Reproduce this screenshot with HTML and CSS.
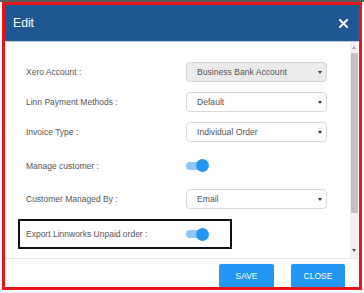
FILE: index.html
```html
<!DOCTYPE html>
<html>
<head>
<meta charset="utf-8">
<link rel="stylesheet" href="styles.css">
</head>
<body>
<div class="topstrip"></div>
<div class="frame">
  <div class="header">
    <span class="title">Edit</span>
    <svg class="close-icon" width="9" height="9" viewBox="0 0 9 9"><path d="M1 1L8 8M8 1L1 8" stroke="#fff" stroke-width="2" stroke-linecap="square"/></svg>
  </div>
  <div class="body">
    <div class="form">
      <div class="row">
        <span class="label">Xero Account :</span>
        <div class="select disabled"><span>Business Bank Account</span><i class="caret"></i></div>
      </div>
      <div class="row">
        <span class="label">Linn Payment Methods :</span>
        <div class="select"><span>Default</span><i class="caret"></i></div>
      </div>
      <div class="row">
        <span class="label">Invoice Type :</span>
        <div class="select"><span>Individual Order</span><i class="caret"></i></div>
      </div>
      <div class="row row-toggle">
        <span class="label">Manage customer :</span>
        <div class="toggle"><span class="knob"></span></div>
      </div>
      <div class="row">
        <span class="label">Customer Managed By :</span>
        <div class="select"><span>Email</span><i class="caret"></i></div>
      </div>
      <div class="row row-highlight">
        <span class="label">Export Linnworks Unpaid order :</span>
        <div class="toggle"><span class="knob"></span></div>
      </div>
    </div>
    <div class="scrollbar">
      <i class="arrow up"></i>
      <div class="thumb"></div>
      <i class="arrow down"></i>
    </div>
  </div>
  <div class="footer">
    <button class="btn save">SAVE</button>
    <button class="btn close">CLOSE</button>
  </div>
</div>
</body>
</html>
```

FILE: styles.css
```css
* { box-sizing: border-box; }
html, body { margin: 0; padding: 0; background: #fff; }
body {
  font-family: "Liberation Sans", Arial, sans-serif;
  width: 364px;
  height: 293px;
  overflow: hidden;
}
.topstrip {
  height: 2px;
  background: #5a5a5a;
}
.frame {
  margin-left: 2px;
  width: 360px;
  height: 288px;
  border: 3px solid #e8141c;
  display: flex;
  flex-direction: column;
  overflow: hidden;
  background: #fff;
}
.header {
  height: 37px;
  flex: none;
  background: #1f5792;
  border-bottom: 1px solid #b9cade;
  display: flex;
  align-items: center;
  justify-content: space-between;
  padding: 0 11px 0 8px;
}
.title {
  color: #fff;
  font-size: 12.2px;
}
.body {
  height: 216px;
  flex: none;
  display: flex;
}
.form {
  flex: 1;
  padding: 20px 0 0 21px;
  display: flex;
  flex-direction: column;
  gap: 10px;
}
.row {
  display: flex;
  align-items: center;
  height: 20px;
}
.row-toggle { height: 27px; }
.row-highlight {
  height: 30px;
  width: 214px;
  margin-left: -8px;
  padding-left: 6px;
  border: 2px solid #111;
}
.label {
  width: 160px;
  flex: none;
  font-size: 8.5px;
  color: #555;
}
.select {
  width: 141px;
  height: 20px;
  border: 1px solid #d9d9d9;
  border-radius: 4px;
  background: #fff;
  display: flex;
  align-items: center;
  justify-content: space-between;
  padding: 0 4px 0 10px;
  font-size: 8.6px;
  color: #555;
}
.select.disabled {
  background: #ebebeb;
  border-color: #d4d4d4;
}
.caret {
  width: 0;
  height: 0;
  border-left: 2px solid transparent;
  border-right: 2px solid transparent;
  border-top: 3px solid #333;
}
.toggle {
  position: relative;
  width: 18px;
  height: 8px;
  border-radius: 4px;
  background: #8fc6f6;
}
.knob {
  position: absolute;
  left: 10px;
  top: -2.5px;
  width: 13px;
  height: 13px;
  border-radius: 50%;
  background: #2196f3;
}
.scrollbar {
  width: 8px;
  margin-right: 1px;
  background: #f1f1f1;
  display: flex;
  flex-direction: column;
  align-items: center;
  padding-top: 4px;
}
.arrow {
  width: 0;
  height: 0;
  border-left: 2px solid transparent;
  border-right: 2px solid transparent;
}
.arrow.up { border-bottom: 3px solid #a3a3a3; }
.arrow.down { border-top: 3px solid #505050; margin-top: 36px; }
.thumb {
  margin-top: 4px;
  width: 7px;
  height: 160px;
  background: #c1c1c1;
}
.footer {
  flex: 1;
  border-top: 1px solid #e5e5e5;
  display: flex;
  justify-content: flex-end;
  gap: 17px;
  padding: 5px 14px 0 0;
}
.btn {
  height: 24px;
  border: none;
  border-radius: 2px;
  background: #2196f3;
  color: #fff;
  font-family: "Liberation Sans", Arial, sans-serif;
  font-size: 8.5px;
  padding: 0;
}
.btn.save { width: 55px; }
.btn.close { width: 54px; }
```
